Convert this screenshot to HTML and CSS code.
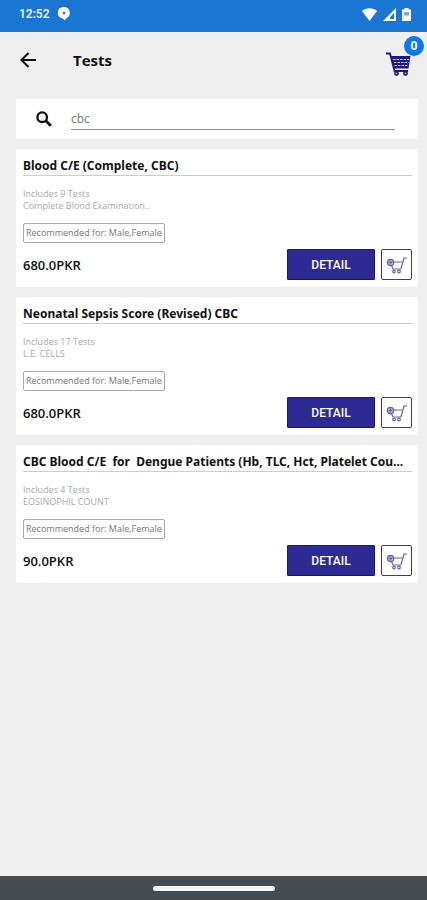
FILE: index.html
```html
<!DOCTYPE html>
<html lang="en">
<head>
<meta charset="utf-8">
<meta name="viewport" content="width=device-width, initial-scale=1">
<title>Tests</title>
<link rel="stylesheet" href="styles.css">
</head>
<body>
<svg class="defs" aria-hidden="true">
  <symbol id="add-cart" viewBox="0 0 22 20">
    <g fill="none" stroke="currentColor" stroke-width="1.2">
      <circle cx="4.500" cy="7.500" r="3.200" fill="#b9b7d8"/>
      <path d="M2.500 7.500h4M4.500 5.500v4"/>
      <path d="M8 7h8M21 3h-3l-3 11H7L5.500 10.500"/>
      <circle cx="8" cy="16.500" r="1.300"/>
      <circle cx="13" cy="16.500" r="1.300"/>
    </g>
  </symbol>
</svg>

<div class="status">
  <span class="clock">12:52</span>
  <svg class="chat" viewBox="0 0 12 14"><path fill="#fff" d="M6 0a5.800 5.800 0 0 1 2.500 11L6.500 13.500 5 11.600A5.800 5.800 0 0 1 6 0z"/><path fill="#1976d2" d="M6 8 4.500 6a1 1 0 0 1 1.500-1A1 1 0 0 1 7.500 6z"/></svg>
  <div class="signals">
    <svg width="15" height="13" viewBox="0 0 15 13"><path fill="#fff" d="M0 3C4-.6 11-.6 15 3L7.500 13z"/></svg>
    <svg width="13" height="13" viewBox="0 0 13 13"><path fill="#fff" fill-rule="evenodd" d="M13 0v13H0zM11 5 7 9.500V11h4z"/></svg>
    <svg width="9" height="13" viewBox="0 0 9 13"><path fill="#fff" d="M2.500 0h4v1.500H9V13H0V1.500h2.500z"/><path fill="#6fa8e3" d="M2 4h5v3.500H2z"/></svg>
  </div>
</div>

<header class="bar">
  <button class="icon-btn" aria-label="Back"><svg width="16" height="16" viewBox="0 0 16 16"><path d="M16 8H1.500M8.500 1 1.500 8l7 7" fill="none" stroke="#111" stroke-width="2"/></svg></button>
  <h1>Tests</h1>
  <button class="icon-btn cart" aria-label="Cart">
    <svg width="26" height="24" viewBox="0 0 26 24">
      <path fill="#1c1a7e" d="M4.500 4H24.500L22.500 16.500H8z"/>
      <path d="M0 1.500h4L8.500 19h13.500" fill="none" stroke="#1c1a7e" stroke-width="1.800"/>
      <path d="M7 7.500h16M8 10.500h14.500M8.500 13.500h13.500" stroke="#c4c3dd" stroke-width="1" stroke-dasharray="2.500 1"/>
      <circle cx="10.500" cy="21.500" r="1.700" fill="#9a9ac5" stroke="#1c1a7e" stroke-width="1.500"/>
      <circle cx="19.500" cy="21.500" r="1.700" fill="#9a9ac5" stroke="#1c1a7e" stroke-width="1.500"/>
    </svg>
    <span class="badge">0</span>
  </button>
</header>

<main>
  <form class="search">
    <svg width="16" height="16" viewBox="0 0 16 16" aria-hidden="true"><g fill="none" stroke="#111"><circle cx="6.200" cy="6.200" r="4.800" stroke-width="2.300"/><path d="m9.800 9.800 5 5" stroke-width="2.800"/></g></svg>
    <input type="text" value="cbc" aria-label="Search tests">
  </form>

  <article class="card">
    <h2>Blood C/E (Complete, CBC)</h2>
    <p>Includes 9 Tests</p>
    <p>Complete Blood Examination..</p>
    <span class="chip">Recommended for: Male,Female</span>
    <div class="foot">
      <strong>680.0PKR</strong>
      <button class="detail">DETAIL</button>
      <button class="add" aria-label="Add to cart"><svg width="22" height="20"><use href="#add-cart"/></svg></button>
    </div>
  </article>

  <article class="card">
    <h2>Neonatal Sepsis Score (Revised) CBC</h2>
    <p>Includes 17 Tests</p>
    <p>L.E. CELLS</p>
    <span class="chip">Recommended for: Male,Female</span>
    <div class="foot">
      <strong>680.0PKR</strong>
      <button class="detail">DETAIL</button>
      <button class="add" aria-label="Add to cart"><svg width="22" height="20"><use href="#add-cart"/></svg></button>
    </div>
  </article>

  <article class="card">
    <h2>CBC Blood C/E  for  Dengue Patients (Hb, TLC, Hct, Platelet Cou...</h2>
    <p>Includes 4 Tests</p>
    <p>EOSINOPHIL COUNT</p>
    <span class="chip">Recommended for: Male,Female</span>
    <div class="foot">
      <strong>90.0PKR</strong>
      <button class="detail">DETAIL</button>
      <button class="add" aria-label="Add to cart"><svg width="22" height="20"><use href="#add-cart"/></svg></button>
    </div>
  </article>
</main>

<div class="nav"><div class="handle"></div></div>
</body>
</html>
```
FILE: styles.css
```css
* { box-sizing: border-box; }

body {
  margin: 0;
  min-height: 100vh;
  display: flex;
  flex-direction: column;
  background: #efefef;
  color: #111;
  font-family: "Open Sans", "Noto Sans", sans-serif;
}

h1, h2, p { margin: 0; }

button {
  padding: 0;
  border: 0;
  background: none;
  font-family: inherit;
}

svg { display: block; }

.defs {
  position: absolute;
  width: 0;
  height: 0;
}

.status {
  display: flex;
  align-items: center;
  height: 32px;
  padding: 0 16px 4px 19px;
  background: #1976d2;
  color: #fff;
}

.clock {
  font: 500 12px/16px Roboto, sans-serif;
}

.chat {
  width: 12px;
  height: 14px;
  margin-left: 9px;
}

.signals {
  display: flex;
  gap: 6px;
  margin-left: auto;
}

.bar {
  display: flex;
  align-items: center;
  height: 56px;
  padding: 0 15px 0 20px;
}

.bar h1 {
  margin-left: 37px;
  font-size: 15px;
  line-height: 20px;
  font-weight: 700;
}

.cart {
  position: relative;
  margin: 8px 0 0 auto;
}

.badge {
  position: absolute;
  right: -12px;
  top: -16px;
  width: 20px;
  height: 20px;
  border-radius: 50%;
  background: #0a78ea;
  color: #fff;
  font: 700 12px/20px Roboto, sans-serif;
}

main {
  flex: 1;
  display: flex;
  flex-direction: column;
  gap: 10px;
  padding: 11px 9px 10px 16px;
}

.search {
  display: flex;
  align-items: center;
  gap: 19px;
  height: 40px;
  padding: 0 23px 0 20px;
  background: #fff;
}

.search input {
  flex: 1;
  min-width: 0;
  height: 21px;
  padding: 0;
  border: 0;
  border-bottom: 1px solid #8c8c8c;
  outline: 0;
  background: none;
  color: #777;
  font: 12px/20px "Open Sans", sans-serif;
}

.card {
  padding: 7px 6px 7px 7px;
  background: #fff;
}

.card h2 {
  height: 20px;
  margin-bottom: 12px;
  border-bottom: 1px solid #ccc;
  font-family: "Noto Sans", sans-serif;
  font-size: 12px;
  line-height: 19px;
  font-weight: 700;
  white-space: pre;
  overflow: hidden;
  text-overflow: ellipsis;
}

.card p {
  color: #aaa;
  font-size: 9px;
  line-height: 12px;
}

.chip {
  display: block;
  width: fit-content;
  height: 20px;
  margin: 11px 0 6px;
  padding: 0 2px;
  border: 1px solid #aaa;
  border-radius: 2px;
  color: #777;
  font-size: 9px;
  line-height: 18px;
}

.foot {
  display: flex;
  align-items: center;
  gap: 6px;
}

.foot strong {
  flex: 1;
  font-size: 13px;
  line-height: 18px;
  font-weight: 600;
}

.detail {
  width: 88px;
  height: 31px;
  border: 1px solid #16128a;
  border-radius: 1px;
  background: #2d2a94;
  color: #fff;
  font: 500 12px/16px Roboto, sans-serif;
}

.add {
  display: grid;
  place-items: center;
  width: 31px;
  height: 31px;
  border: 1px solid #3b3790;
  border-radius: 2px;
  color: #6562a4;
}

.nav {
  display: flex;
  justify-content: center;
  align-items: center;
  height: 24px;
  background: #444c50;
}

.handle {
  width: 122px;
  height: 5px;
  border-radius: 3px;
  background: #f4f4f6;
}
```
